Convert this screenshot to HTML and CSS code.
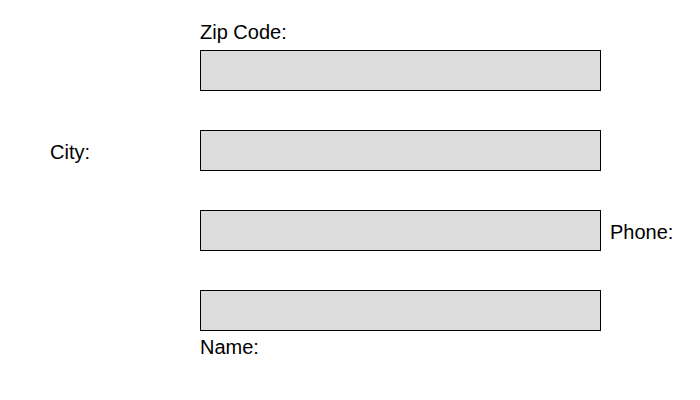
FILE: index.html
```html
<!DOCTYPE html>
<html lang="en">
<head>
<meta charset="utf-8">
<meta name="viewport" content="width=device-width, initial-scale=1">
<title>Contact form</title>
<link rel="stylesheet" href="styles.css">
</head>
<body>
<form class="form">
  <label class="label label-above" for="zip">Zip Code:</label>
  <input class="field field-zip" id="zip" type="text">
  <label class="label label-left" for="city">City:</label>
  <input class="field field-city" id="city" type="text">
  <input class="field field-phone" id="phone" type="text">
  <label class="label label-right" for="phone">Phone:</label>
  <input class="field field-name" id="name" type="text">
  <label class="label label-below" for="name">Name:</label>
</form>
</body>
</html>
```

FILE: styles.css
```css
* {
  box-sizing: border-box;
}

body {
  margin: 0;
  background: #ffffff;
  color: #000000;
  font-family: "Liberation Sans", Arial, sans-serif;
  font-size: 20px;
  line-height: 24px;
}

.form {
  display: grid;
  grid-template-columns: 141px minmax(0, 1fr) 81px;
  grid-template-rows: 30px 41px 39px 41px 39px 41px 39px 41px auto;
  column-gap: 9px;
  padding: 20px 9px 20px 50px;
}

.label {
  justify-self: start;
}

.field {
  grid-column: 2;
  width: 100%;
  height: 41px;
  margin: 0;
  padding: 0 8px;
  border: 1px solid #000000;
  border-radius: 0;
  background: #dcdcdc;
  color: inherit;
  font: inherit;
}

.label-above {
  grid-area: 1 / 2;
}

.field-zip {
  grid-row: 2;
}

.label-left {
  grid-area: 4 / 1;
  padding-top: 10px;
}

.field-city {
  grid-row: 4;
}

.field-phone {
  grid-row: 6;
}

.label-right {
  grid-area: 6 / 3;
  padding-top: 10px;
}

.field-name {
  grid-row: 8;
}

.label-below {
  grid-area: 9 / 2;
  padding-top: 4px;
}
```
